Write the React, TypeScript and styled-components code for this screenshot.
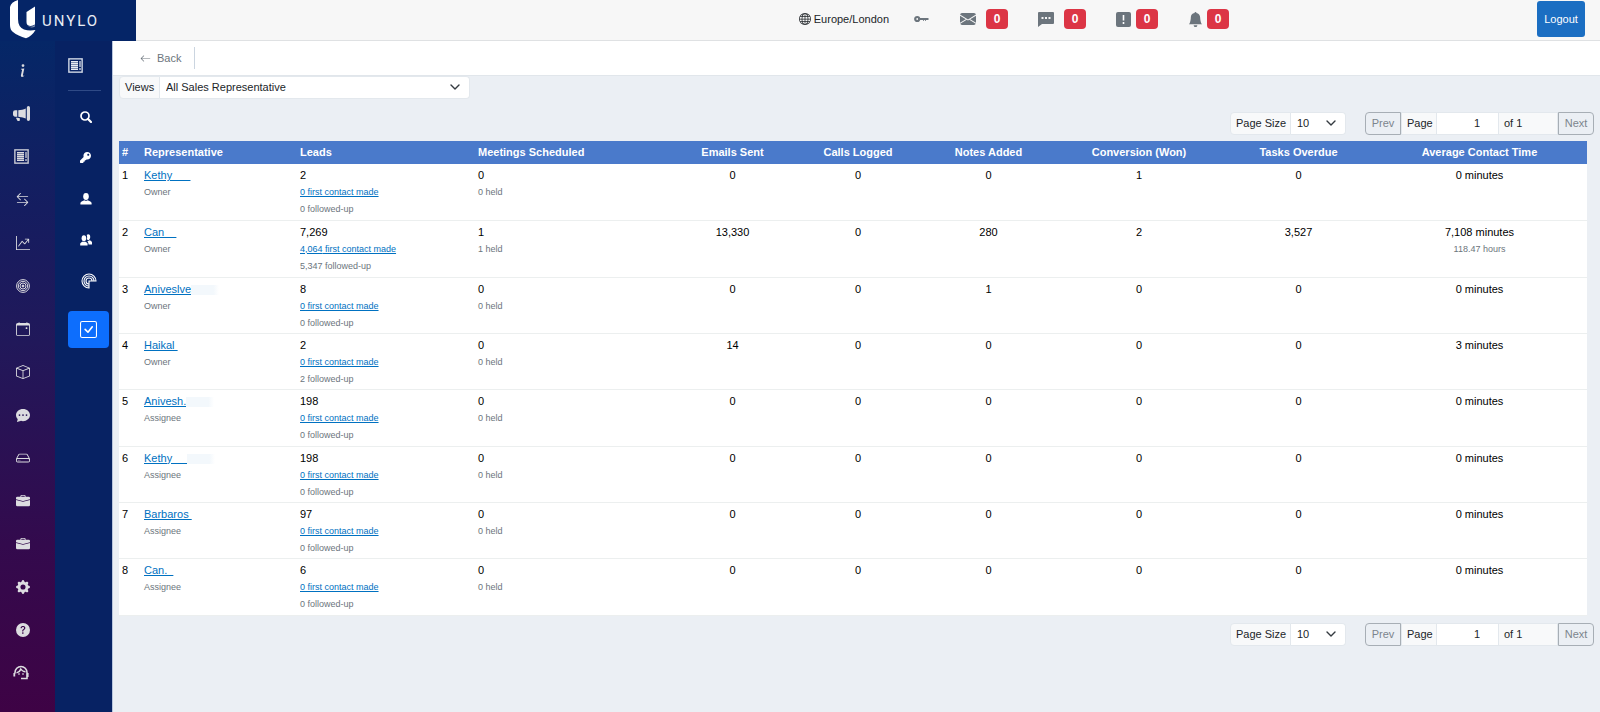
import React, { useState } from "react";
import styled, { createGlobalStyle, css } from "styled-components";
import {
  BsArrowLeft,
  BsArrowLeftRight,
  BsBellFill,
  BsBox,
  BsBriefcaseFill,
  BsCalendarEvent,
  BsChatDotsFill,
  BsCheckSquare,
  BsEnvelopeFill,
  BsGearFill,
  BsGlobe,
  BsGraphUpArrow,
  BsHdd,
  BsInfoLg,
  BsMegaphoneFill,
  BsQuestionCircleFill,
} from "react-icons/bs";
import { FaKey } from "react-icons/fa";

const GlobalStyle = createGlobalStyle`
  *, *::before, *::after { box-sizing: border-box; }
  body {
    margin: 0;
    background: #ebeff4;
    color: #212529;
    font-family: "Liberation Sans", Arial, sans-serif;
    font-size: 11px;
    line-height: 17px;
  }
  button, input, select { font: inherit; color: inherit; margin: 0; }
  svg { display: block; flex: none; }
`;

const Page = styled.div`
  display: flex;
  flex-direction: column;
  min-height: 100vh;
`;

const TopBar = styled.header`
  display: flex;
  align-items: stretch;
  height: 41px;
  background: #f7f7f7;
`;

const Brand = styled.a`
  display: flex;
  align-items: flex-start;
  gap: 6px;
  width: 136px;
  padding-left: 10px;
  background: #052567;
  color: #e9edf5;
  font-family: Roboto, sans-serif;
  font-size: 15px;
  line-height: 42px;
  letter-spacing: 2px;
  text-decoration: none;
`;

const TopTools = styled.div`
  flex: 1;
  display: flex;
  align-items: center;
  justify-content: flex-end;
  padding: 0 15px 2px 0;
  border-bottom: 1px solid #dfe1e3;
  color: #6c757d;
`;

const TimeZone = styled.span`
  display: flex;
  align-items: center;
  gap: 3px;
  margin-right: 25px;
  color: #212529;
`;

const Notice = styled.button<{ $gap: number; $after: number }>`
  display: flex;
  align-items: center;
  gap: ${(p) => p.$gap}px;
  margin-right: ${(p) => p.$after}px;
  padding: 0;
  border: 0;
  background: none;
  color: #6c757d;
`;

const Badge = styled.span`
  width: 22px;
  border-radius: 4px;
  background: #dc3545;
  color: #fff;
  font-size: 12px;
  font-weight: 700;
  line-height: 20px;
  text-align: center;
`;

const Logout = styled.button`
  width: 48px;
  height: 36px;
  padding: 0;
  border: 0;
  border-radius: 3px;
  background: #1b6ec2;
  color: #fff;
`;

const Body = styled.div`
  flex: 1;
  display: flex;
  align-items: stretch;
`;

const MainNav = styled.nav`
  width: 55px;
  padding-top: 8px;
  background: linear-gradient(#052767, #151d60 25%, #21185a 45%, #330a4d 75%, #3e0345);
`;

const NavItem = styled.a<{ $shift?: boolean }>`
  display: flex;
  align-items: center;
  justify-content: center;
  height: 43px;
  padding-right: ${(p) => (p.$shift ? 13 : 10)}px;
  color: #dcdce0;
`;

const SubNav = styled.nav`
  width: 58px;
  padding: 17px 3px 0 13px;
  border-right: 1px solid #b9c6dd;
  background: #072263;
`;

const SubHeading = styled.div`
  height: 33px;
  margin: 0 8px 5px 0;
  border-bottom: 1px solid #2f4a86;
  color: #e8ecf4;
`;

const SubItem = styled.a<{ $active?: boolean; $small?: boolean }>`
  display: flex;
  align-items: center;
  justify-content: center;
  height: 41px;
  padding-right: ${(p) => (p.$small ? 6 : 0)}px;
  color: #fff;
  ${(p) =>
    p.$active &&
    css`
      height: 37px;
      margin-top: 10px;
      border-radius: 4px;
      background: #0d6efd;
    `}
`;

const Main = styled.main`
  flex: 1;
  min-width: 0;
`;

const ActionBar = styled.div`
  display: flex;
  align-items: center;
  height: 35px;
  padding-left: 27px;
  border-bottom: 1px solid #e1e6eb;
  background: #fff;
`;

const BackLink = styled.a`
  display: flex;
  align-items: center;
  gap: 6px;
  padding-right: 13px;
  border-right: 1px solid #cbd5e0;
  color: #6c757d;
  line-height: 22px;
  text-decoration: none;
`;

const Content = styled.div`
  padding: 0 6px;
`;

const Group = styled.div<{ $width?: number }>`
  display: flex;
  width: ${(p) => (p.$width ? `${p.$width}px` : "auto")};
  height: 23px;
`;

const Cell = css`
  border: 1px solid #e3e8ed;
  background: #f8f9fa;
  line-height: 21px;
  white-space: nowrap;
`;

const Label = styled.label<{ $width: number; $first?: boolean }>`
  ${Cell}
  width: ${(p) => p.$width}px;
  padding-left: 5px;
  border-radius: ${(p) => (p.$first ? "4px 0 0 4px" : 0)};
`;

const PageTotal = styled.span`
  ${Cell}
  width: 60px;
  padding-left: 5px;
`;

const SelectBox = styled.span`
  position: relative;
  flex: 1;
  display: flex;

  svg {
    position: absolute;
    right: 10px;
    top: 6px;
    pointer-events: none;
  }
`;

const Select = styled.select`
  flex: 1;
  min-width: 0;
  padding: 0 6px;
  border: 1px solid #e3e8ed;
  border-left: 0;
  border-radius: 0 4px 4px 0;
  background: #fff;
  appearance: none;
`;

const PagerRow = styled.div<{ $top: number; $bottom: number }>`
  display: flex;
  justify-content: flex-end;
  gap: 19px;
  padding: ${(p) => p.$top}px 0 ${(p) => p.$bottom}px;
`;

const StepButton = styled.button<{ $side: "left" | "right" }>`
  width: 36px;
  padding: 0;
  border: 1px solid #a7aeb5;
  border-radius: ${(p) => (p.$side === "left" ? "4px 0 0 4px" : "0 4px 4px 0")};
  background: transparent;
  color: #7c858d;
`;

const PageInput = styled.input`
  width: 61px;
  padding: 0 18px 0 0;
  border: 1px solid #e3e8ed;
  border-width: 1px 0;
  background: #fff;
  text-align: right;
`;

const TableWrap = styled.div`
  padding-right: 7px;
`;

const Table = styled.table`
  width: 100%;
  border-collapse: collapse;
  table-layout: fixed;
  background: #fff;
  color: #000;
`;

const HeadCell = styled.th<{ $center?: boolean }>`
  height: 23px;
  padding: 0 3px;
  background: #4a7acb;
  color: #fff;
  font-weight: 700;
  text-align: ${(p) => (p.$center ? "center" : "left")};
  white-space: nowrap;
`;

const Row = styled.tr`
  height: 56px;
  border-bottom: 1px solid #ecefef;

  &:nth-child(3n + 2) {
    height: 57px;
  }
`;

const DataCell = styled.td<{ $center?: boolean }>`
  padding: 3px 3px 1px;
  text-align: ${(p) => (p.$center ? "center" : "left")};
  vertical-align: top;
`;

const Note = styled.div`
  color: #6c757d;
  font-size: 9px;
`;

const Link = styled.a`
  color: #0071c1;
  text-decoration: underline;
  white-space: pre;
`;

const Smudge = styled.span`
  display: inline-block;
  width: 28px;
  height: 10px;
  background: linear-gradient(90deg, #f3f8fc, #f3f8fc 80%, #fff);
  vertical-align: middle;
`;

const LogoMark = () => (
  <svg width="26" height="39" viewBox="0 0 26 39" fill="#fff" aria-hidden="true">
    <path d="M0 7Q1 2 8 0V19Q8 27 14 29.500Q19 31 25.500 30Q22 36 16 38.300Q8 36 3 32Q0 30 0 25Z" />
    <path d="M16.500 12L25 6.500V24.500Q21 27 17.500 25Q16.500 24 16.500 22Z" />
    <path d="M17.500 25.500Q21 28 25 25V26.500Q21 29 17.500 25.500Z" opacity=".5" />
  </svg>
);

const StampIcon = () => (
  <svg width="15" height="15" viewBox="0 0 15 15" fill="none" stroke="currentColor" aria-hidden="true">
    <rect x="1" y="1" width="13" height="13" strokeWidth="1" />
    <rect x=".5" y=".5" width="14" height="14" strokeWidth="1" strokeDasharray="1 1" />
    <path d="M3 3.500H10M3 5.500H10M3 7.500H10M3 9.500H10M3 11.500H10" strokeWidth="1" />
    <path d="M3 4.500H10M3 6.500H10M3 8.500H10M3 10.500H10" strokeWidth="1" opacity=".55" />
    <path d="M12 3V12" strokeWidth="1.200" strokeDasharray="6 1" />
  </svg>
);

const TargetIcon = () => (
  <svg width="14" height="14" viewBox="0 0 14 14" fill="none" stroke="currentColor" strokeWidth="1" aria-hidden="true">
    <circle cx="7" cy="7" r="6.400" />
    <circle cx="7" cy="7" r="4.700" />
    <circle cx="7" cy="7" r="3" />
    <circle cx="7" cy="7" r="1" fill="currentColor" />
  </svg>
);

const SearchIcon = () => (
  <svg width="12" height="12" viewBox="0 0 12 12" fill="none" stroke="currentColor" aria-hidden="true">
    <circle cx="5" cy="5" r="4" strokeWidth="1.700" />
    <path d="M7.800 7.800L11 11" strokeWidth="2.200" strokeLinecap="round" />
  </svg>
);

const UserIcon = () => (
  <svg width="12" height="12" viewBox="0 0 12 12" fill="currentColor" aria-hidden="true">
    <ellipse cx="6" cy="3.500" rx="2.800" ry="3.400" />
    <path d="M.4 11.500V9.700Q.8 8.400 4.300 7.200Q6 8.300 7.700 7.200Q11.200 8.400 11.600 9.700V11.500Z" />
  </svg>
);

const UsersIcon = () => (
  <svg width="12" height="12" viewBox="0 0 12 12" fill="currentColor" aria-hidden="true">
    <ellipse cx="3.900" cy="4.300" rx="2.300" ry="3" />
    <path d="M.2 11.500V9.500Q.5 8.500 2.900 7.600Q3.900 8.200 4.900 7.600Q7.200 8.500 7.600 9.500V11.500Z" />
    <path d="M6.700 1Q8-.4 9.600.8Q11 3 9.400 5.500Q8.400 6.500 6.800 5.600Q7.500 3 6.700 1Z" />
    <path d="M7.400 7.200L9.600 6.300Q11.600 7 12 8.300V10.500H8.600Q8.500 8.400 7.400 7.200Z" />
  </svg>
);

const RadarIcon = () => (
  <svg width="16" height="16" viewBox="0 0 16 16" fill="none" stroke="currentColor" strokeWidth="1.100" aria-hidden="true">
    <path d="M15 8A7 7 0 1 0 8 15V8Z" />
    <path d="M13 8A5 5 0 1 0 8 13M11 8A3 3 0 1 0 8 11" />
  </svg>
);

const SupportIcon = () => (
  <svg width="16" height="15" viewBox="0 0 16 15" fill="none" stroke="currentColor" aria-hidden="true">
    <path d="M2 8.500V7.500A6 6 0 0 1 14 7.500V13.500H8" strokeWidth="1.600" />
    <path d="M1.300 8V11.500M14.700 8V12" strokeWidth="1.800" />
    <path d="M3.500 7.800Q7 6.800 7.800 4Q9.500 6.800 12.500 6.800" strokeWidth="1.400" />
    <path d="M5.300 9H6.700M9.300 9H10.700" strokeWidth="1.400" />
  </svg>
);

const OldKeyIcon = () => (
  <svg width="15" height="8" viewBox="0 0 15 8" fill="none" stroke="currentColor" aria-hidden="true">
    <circle cx="3.200" cy="4" r="2" strokeWidth="2.200" />
    <path d="M6 4H14.500" strokeWidth="2" />
    <path d="M9 5.300H13" strokeWidth="1" strokeDasharray="1 1" />
  </svg>
);

const CommentIcon = () => (
  <svg width="16" height="15" viewBox="0 0 16 15" fill="currentColor" aria-hidden="true">
    <path
      fillRule="evenodd"
      d="M1 0H15Q16 0 16 1V11Q16 12 15 12H4L0 15V1Q0 0 1 0ZM3.500 5V7H5.500V5ZM7 5V7H9V5ZM10.500 5V7H12.500V5Z"
    />
  </svg>
);

const AlertIcon = () => (
  <svg width="15" height="15" viewBox="0 0 15 15" aria-hidden="true">
    <rect width="15" height="15" rx="2" fill="currentColor" />
    <path d="M7.500 3V8.500M7.500 10V12" stroke="#fff" strokeWidth="1.600" />
  </svg>
);

const ChevronIcon = () => (
  <svg width="10" height="10" viewBox="0 0 10 10" fill="none" stroke="#343a40" strokeWidth="1.400" aria-hidden="true">
    <path d="M1 3L5 7L9 3" strokeLinecap="round" strokeLinejoin="round" />
  </svg>
);

const mainNav = [
  { label: "Information", icon: <BsInfoLg size={17} /> },
  { label: "Campaigns", icon: <BsMegaphoneFill size={17} />, shift: true },
  { label: "Leads", icon: <StampIcon />, shift: true },
  { label: "Transfers", icon: <BsArrowLeftRight size={13} /> },
  { label: "Reports", icon: <BsGraphUpArrow size={14} /> },
  { label: "Targets", icon: <TargetIcon /> },
  { label: "Calendar", icon: <BsCalendarEvent size={14} /> },
  { label: "Products", icon: <BsBox size={14} /> },
  { label: "Messages", icon: <BsChatDotsFill size={14} /> },
  { label: "Storage", icon: <BsHdd size={14} /> },
  { label: "Business", icon: <BsBriefcaseFill size={14} /> },
  { label: "Portfolio", icon: <BsBriefcaseFill size={14} /> },
  { label: "Settings", icon: <BsGearFill size={14} /> },
  { label: "Help", icon: <BsQuestionCircleFill size={14} /> },
  { label: "Support", icon: <SupportIcon />, shift: true },
];

const subNav = [
  { label: "Search", icon: <SearchIcon />, small: true },
  { label: "Access", icon: <FaKey size={11} />, small: true },
  { label: "User", icon: <UserIcon />, small: true },
  { label: "Teams", icon: <UsersIcon />, small: true },
  { label: "Activity", icon: <RadarIcon /> },
  { label: "Performance", icon: <BsCheckSquare size={17} />, active: true },
];

const columns = [
  { title: "#", width: 22 },
  { title: "Representative", width: 156 },
  { title: "Leads", width: 178 },
  { title: "Meetings Scheduled", width: 198 },
  { title: "Emails Sent", width: 119, center: true },
  { title: "Calls Logged", width: 132, center: true },
  { title: "Notes Added", width: 129, center: true },
  { title: "Conversion (Won)", width: 172, center: true },
  { title: "Tasks Overdue", width: 147, center: true },
  { title: "Average Contact Time", width: 215, center: true },
];

interface Rep {
  name: string;
  smudge?: boolean;
  role: string;
  leads: string;
  contacted?: string;
  followed?: string;
  meetings?: string;
  counts?: string[];
  minutes?: string;
  hours?: string;
}

const reps: Rep[] = [
  { name: "Kethy      ", role: "Owner", leads: "2", counts: ["0", "0", "0", "1", "0"] },
  {
    name: "Can    ",
    role: "Owner",
    leads: "7,269",
    contacted: "4,064",
    followed: "5,347",
    meetings: "1",
    counts: ["13,330", "0", "280", "2", "3,527"],
    minutes: "7,108",
    hours: "118.47",
  },
  { name: "Aniveslve", smudge: true, role: "Owner", leads: "8", counts: ["0", "0", "1", "0", "0"] },
  { name: "Haikal ", role: "Owner", leads: "2", followed: "2", counts: ["14", "0", "0", "0", "0"], minutes: "3" },
  { name: "Anivesh.", smudge: true, role: "Assignee", leads: "198" },
  { name: "Kethy     ", smudge: true, role: "Assignee", leads: "198" },
  { name: "Barbaros ", role: "Assignee", leads: "97" },
  { name: "Can.  ", role: "Assignee", leads: "6" },
];

function Pager({ id, top, bottom }: { id: string; top: number; bottom: number }) {
  const [page, setPage] = useState("1");
  return (
    <PagerRow $top={top} $bottom={bottom}>
      <Group $width={116}>
        <Label $width={61} $first htmlFor={`${id}-size`}>
          Page Size
        </Label>
        <SelectBox>
          <Select id={`${id}-size`} defaultValue="10">
            <option>10</option>
            <option>25</option>
            <option>50</option>
          </Select>
          <ChevronIcon />
        </SelectBox>
      </Group>
      <Group>
        <StepButton $side="left">Prev</StepButton>
        <Label $width={36} htmlFor={`${id}-page`}>
          Page
        </Label>
        <PageInput id={`${id}-page`} value={page} onChange={(e) => setPage(e.target.value)} />
        <PageTotal>of 1</PageTotal>
        <StepButton $side="right">Next</StepButton>
      </Group>
    </PagerRow>
  );
}

export default function App() {
  return (
    <Page>
      <GlobalStyle />
      <TopBar>
        <Brand href="#">
          <LogoMark />
          UNYLO
        </Brand>
        <TopTools>
          <TimeZone>
            <BsGlobe size={12} />
            Europe/London
          </TimeZone>
          <Notice $gap={0} $after={31} aria-label="Password">
            <OldKeyIcon />
          </Notice>
          <Notice $gap={10} $after={30} aria-label="Mail">
            <BsEnvelopeFill size={16} />
            <Badge>0</Badge>
          </Notice>
          <Notice $gap={10} $after={30} aria-label="Comments">
            <CommentIcon />
            <Badge>0</Badge>
          </Notice>
          <Notice $gap={5} $after={30} aria-label="Alerts">
            <AlertIcon />
            <Badge>0</Badge>
          </Notice>
          <Notice $gap={4} $after={308} aria-label="Notifications">
            <BsBellFill size={15} />
            <Badge>0</Badge>
          </Notice>
          <Logout>Logout</Logout>
        </TopTools>
      </TopBar>
      <Body>
        <MainNav>
          {mainNav.map((item) => (
            <NavItem key={item.label} href="#" aria-label={item.label} $shift={item.shift}>
              {item.icon}
            </NavItem>
          ))}
        </MainNav>
        <SubNav>
          <SubHeading>
            <StampIcon />
          </SubHeading>
          {subNav.map((item) => (
            <SubItem key={item.label} href="#" aria-label={item.label} $active={item.active} $small={item.small}>
              {item.icon}
            </SubItem>
          ))}
        </SubNav>
        <Main>
          <ActionBar>
            <BackLink href="#">
              <BsArrowLeft size={11} />
              Back
            </BackLink>
          </ActionBar>
          <Content>
            <Group $width={351}>
              <Label $width={41} $first htmlFor="views">
                Views
              </Label>
              <SelectBox>
                <Select id="views">
                  <option>All Sales Representative</option>
                </Select>
                <ChevronIcon />
              </SelectBox>
            </Group>
            <Pager id="top" top={13} bottom={6} />
            <TableWrap>
              <Table>
                <colgroup>
                  {columns.map((c) => (
                    <col key={c.title} style={{ width: c.width }} />
                  ))}
                </colgroup>
                <thead>
                  <tr>
                    {columns.map((c) => (
                      <HeadCell key={c.title} scope="col" $center={c.center}>
                        {c.title}
                      </HeadCell>
                    ))}
                  </tr>
                </thead>
                <tbody>
                  {reps.map((rep, i) => (
                    <Row key={i}>
                      <DataCell>{i + 1}</DataCell>
                      <DataCell>
                        <Link href="#">{rep.name.replace(/ /g, "\u00a0")}</Link>
                        {rep.smudge && <Smudge />}
                        <Note>{rep.role}</Note>
                      </DataCell>
                      <DataCell>
                        {rep.leads}
                        <Note>
                          <Link href="#">{rep.contacted ?? "0"} first contact made</Link>
                        </Note>
                        <Note>{rep.followed ?? "0"} followed-up</Note>
                      </DataCell>
                      <DataCell>
                        {rep.meetings ?? "0"}
                        <Note>{rep.meetings ?? "0"} held</Note>
                      </DataCell>
                      {(rep.counts ?? ["0", "0", "0", "0", "0"]).map((n, j) => (
                        <DataCell key={j} $center>
                          {n}
                        </DataCell>
                      ))}
                      <DataCell $center>
                        {rep.minutes ?? "0"} minutes
                        {rep.hours && <Note>{rep.hours} hours</Note>}
                      </DataCell>
                    </Row>
                  ))}
                </tbody>
              </Table>
            </TableWrap>
            <Pager id="bottom" top={7} bottom={7} />
          </Content>
        </Main>
      </Body>
    </Page>
  );
}
